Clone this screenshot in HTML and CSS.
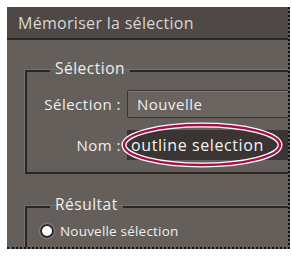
FILE: index.html
```html
<!DOCTYPE html>
<html>
<head>
    <title>Mémoriser la sélection</title>
    <link rel="stylesheet" href="styles.css">
</head>
<body>
    <div class="dialog">
        <div class="title">Mémoriser la sélection</div>
        <div class="content">
            <fieldset class="group first">
                <legend>Sélection</legend>
                <div class="row">
                    <label>Sélection :</label>
                    <div class="select">Nouvelle</div>
                </div>
                <div class="row name-row">
                    <label>Nom :</label>
                    <div class="input">outline selection</div>
                    <svg class="callout" width="164" height="50" viewBox="0 0 164 50">
                        <ellipse cx="81" cy="24" rx="78" ry="20" fill="none" stroke="#ffffff" stroke-width="5"/>
                        <ellipse cx="81" cy="24" rx="78" ry="20" fill="none" stroke="#a3114c" stroke-width="2.5"/>
                    </svg>
                </div>
            </fieldset>

            <fieldset class="group second">
                <legend>Résultat</legend>
                <div class="radio-row">
                    <span class="radio"></span>
                    <span>Nouvelle sélection</span>
                </div>
            </fieldset>
        </div>
    </div>
</body>
</html>
```

FILE: styles.css
```css
body {
    margin: 0;
    background: #ffffff;
    font-family: "Open Sans", sans-serif;
}
.dialog {
    margin: 7px 0 0 7px;
    width: 281px;
    height: 240px;
    background: #655f5c;
    border-right: 2px dotted #111;
    border-bottom: 2px dotted #111;
    overflow: hidden;
}
.title {
    height: 31px;
    line-height: 32px;
    padding-left: 11px;
    background: #4e4946;
    border-bottom: 2px solid #2a2624;
    color: #d9d6d4;
    font-size: 16px;
    letter-spacing: 0.3px;
}
.content {
    padding: 19px 0 0 18px;
}
.group {
    margin: 0;
    padding: 0 0 12px 0;
    width: 300px;
    border: 2px solid #2b2725;
    border-right: none;
    box-shadow: -1px -1px 0 #77716e;
    color: #eeeeee;
    font-size: 15px;
    letter-spacing: 0.5px;
}
.group legend {
    margin-left: 23px;
    padding: 0 5px 6px 5px;
    font-size: 15.5px;
    line-height: 18px;
}
.row {
    display: flex;
    align-items: center;
    position: relative;
}
.row label {
    width: 94px;
    margin-right: 6px;
    text-align: right;
}
.row:first-of-type {
    margin-top: 7px;
}
.select {
    flex: 1;
    height: 26px;
    line-height: 26px;
    padding-left: 9px;
    background: #6a6461;
    border: 1px solid #3a3533;
    border-radius: 2px;
    box-shadow: inset 0 1px 0 #807a77;
}
.name-row {
    margin-top: 12px;
}
.input {
    flex: 1;
    height: 30px;
    line-height: 30px;
    padding-left: 4px;
    background: #3a3533;
    color: #f4f4f4;
    font-size: 16px;
    letter-spacing: 0.6px;
}
.callout {
    position: absolute;
    left: 94px;
    top: -9px;
}
.second {
    margin-top: 21px;
}
.radio-row {
    display: flex;
    align-items: center;
    margin-top: 3px;
    margin-left: 13px;
    font-size: 13.5px;
    letter-spacing: 0.2px;
}
.radio {
    width: 10px;
    height: 10px;
    margin-right: 6px;
    border-radius: 50%;
    background: #ffffff;
    border: 2px solid #2a2624;
    box-shadow: 0 0 2px #dddddd;
}
```
